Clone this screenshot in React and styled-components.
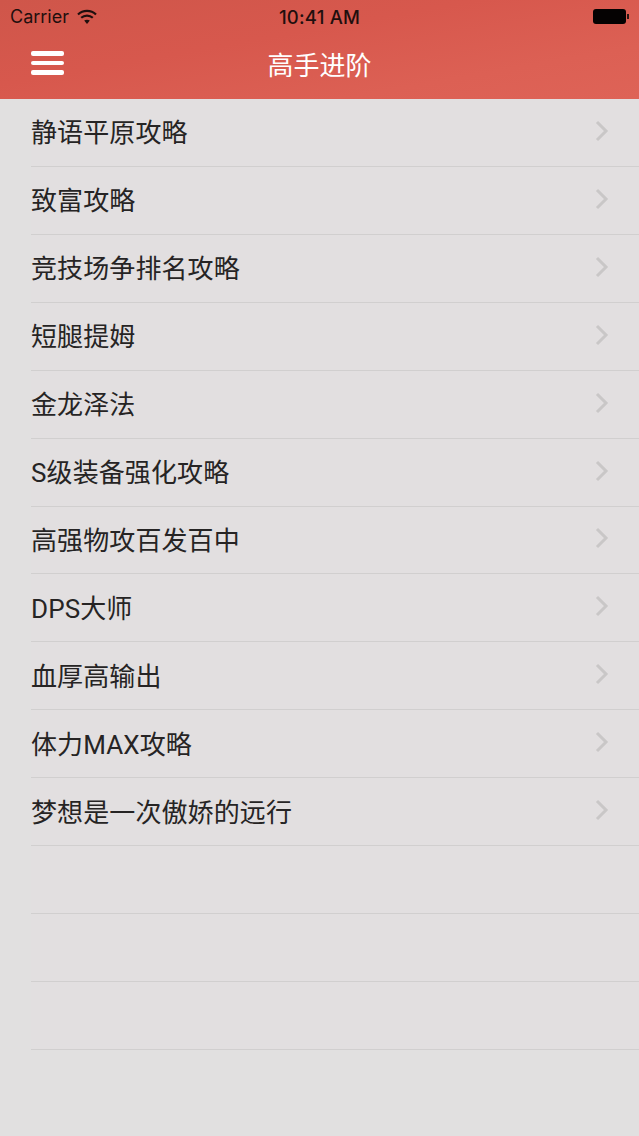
import React from 'react'
import styled, { createGlobalStyle } from 'styled-components'

const GlobalStyle = createGlobalStyle`
  html, body { margin: 0; padding: 0; background: #e1e0e0; }
  body { font-family: Roboto, "Noto Sans CJK SC", sans-serif; }
`

const items = [
  '静语平原攻略',
  '致富攻略',
  '竞技场争排名攻略',
  '短腿提姆',
  '金龙泽法',
  'S级装备强化攻略',
  '高强物攻百发百中',
  'DPS大师',
  '血厚高输出',
  '体力MAX攻略',
  '梦想是一次傲娇的远行',
]

const Page = styled.div`
  width: 639px;
  height: 1136px;
  overflow: hidden;
  background: #e1e0e0;
`
const Header = styled.header`
  height: 99px;
  box-sizing: border-box;
  background: linear-gradient(170deg, #cf564a 0%, #d7584d 40%, #dc6054 75%, #de6357 100%);
  display: flex;
  flex-direction: column;
`
const StatusBar = styled.div`
  height: 33px;
  padding: 0 10px;
  display: grid;
  grid-template-columns: 1fr auto 1fr;
  align-items: center;
  color: #1f0f0e;
  font-family: Inter, "Liberation Sans", sans-serif;
  font-size: 18px;
`
const Carrier = styled.div`
  display: flex;
  align-items: center;
  gap: 8px;
`
const Clock = styled.div`
  font-weight: 500;
  font-size: 18.5px;
  letter-spacing: 0.2px;
`
const Battery = styled.div`
  justify-self: end;
  display: flex;
  align-items: center;
  gap: 1px;
  margin-right: 0;
`
const BatteryBody = styled.div`
  width: 33px;
  height: 15px;
  border-radius: 3px;
  background: #050202;
`
const BatteryCap = styled.div`
  width: 2px;
  height: 5px;
  background: #2a1512;
`
const NavBar = styled.div`
  height: 66px;
  margin-top: -3px;
  padding-left: 31px;
  display: flex;
  align-items: center;
  position: relative;
`
const Burger = styled.div`
  width: 33px;
  display: flex;
  flex-direction: column;
  gap: 5px;
`
const BurgerLine = styled.div`
  height: 4.6px;
  border-radius: 2px;
  background: #fff;
`
const Title = styled.div`
  position: absolute;
  left: 0;
  right: 0;
  text-align: center;
  color: #fff;
  font-size: 26px;
`
const Row = styled.div`
  height: 67.93px;
  margin-left: 31px;
  box-sizing: border-box;
  border-bottom: 1px solid #d1cfcf;
  padding-right: 30px;
  display: flex;
  align-items: center;
  justify-content: space-between;
  background: #e2dfe0;
  color: #262424;
  font-size: 26px;
  letter-spacing: 0.1px;
`
const Label = styled.span`
  margin-top: -3px;
`
const Chevron = styled.svg`
  width: 14px;
  height: 22px;
  margin-top: -3px;
`

export default function App() {
  return (
    <Page>
      <GlobalStyle />
      <Header>
        <StatusBar>
          <Carrier>
            <span>Carrier</span>
            <svg width="20" height="16" viewBox="0 0 20 16">
              <path d="M1 5.5C6 .7 14 .7 19 5.5" fill="none" stroke="#1f0f0e" strokeWidth="2.2" />
              <path d="M4.2 8.8c3.2-3 8.4-3 11.6 0" fill="none" stroke="#1f0f0e" strokeWidth="2.2" />
              <path d="M7.2 11.6c1.6-1.3 4-1.3 5.6 0L10 15z" fill="#1f0f0e" />
            </svg>
          </Carrier>
          <Clock>10:41 AM</Clock>
          <Battery>
            <BatteryBody />
            <BatteryCap />
          </Battery>
        </StatusBar>
        <NavBar>
          <Burger>
            <BurgerLine />
            <BurgerLine />
            <BurgerLine />
          </Burger>
          <Title>高手进阶</Title>
        </NavBar>
      </Header>
      {items.map(text => (
        <Row key={text}>
          <Label>{text}</Label>
          <Chevron viewBox="0 0 14 22">
            <path d="M2 2l9 9-9 9" fill="none" stroke="#c9c7c7" strokeWidth="3" />
          </Chevron>
        </Row>
      ))}
      <Row />
      <Row />
      <Row />
    </Page>
  )
}
